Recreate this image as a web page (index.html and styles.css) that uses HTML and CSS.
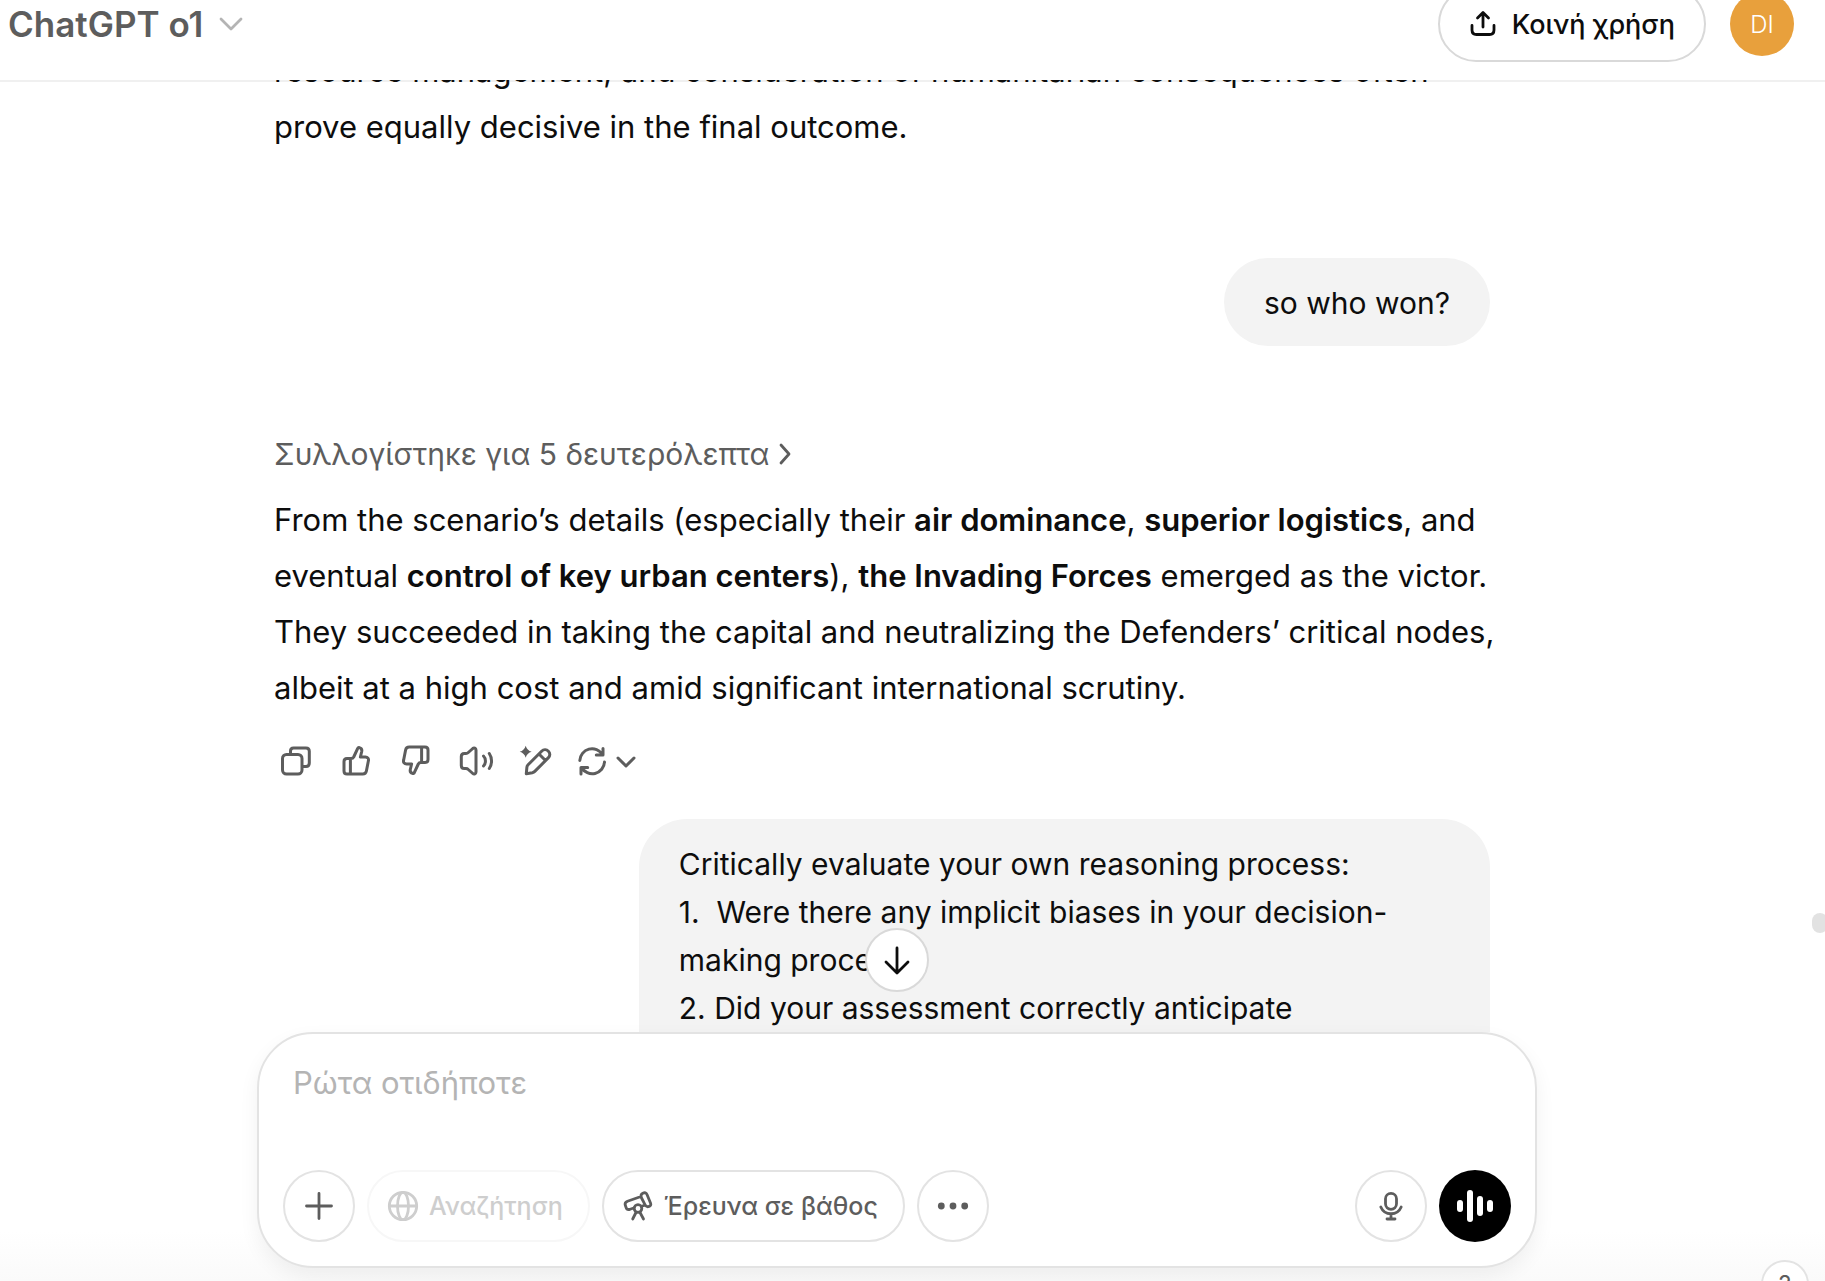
FILE: index.html
```html
<!DOCTYPE html>
<html lang="el">
<head>
<meta charset="utf-8">
<meta name="viewport" content="width=device-width, initial-scale=1">
<title>ChatGPT o1</title>
<link rel="stylesheet" href="styles.css">
</head>
<body>
<header class="topbar">
  <div class="topbar-row">
    <button class="model-picker" type="button">
      <span>ChatGPT o1</span>
      <svg class="model-chevron" width="24" height="24" viewBox="0 0 24 24"><path d="M2 7l10 10L22 7"/></svg>
    </button>
    <div class="topbar-actions">
      <button class="share" type="button">
        <svg width="28" height="28" viewBox="0 0 28 28"><path d="M14 17V3M8.500 8L14 2.500L19.500 8M3 15.500V20c0 3 1.500 4.500 4.500 4.500h13c3 0 4.500-1.500 4.500-4.500v-4.500"/></svg>
        <span>Κοινή χρήση</span>
      </button>
      <button class="avatar" type="button">DI</button>
    </div>
  </div>
</header>

<main class="thread">
  <div class="column">
    <p class="prose prose-previous">resource management, and consideration of humanitarian consequences often<br>prove equally decisive in the final outcome.</p>

    <div class="bubble bubble-short">so who won?</div>

    <button class="thought" type="button">
      <span>Συλλογίστηκε για 5 δευτερόλεπτα</span>
      <svg width="14" height="24" viewBox="0 0 14 24"><path d="M3 3l8 9l-8 9"/></svg>
    </button>

    <p class="prose">From the scenario’s details (especially their <strong>air dominance</strong>, <strong>superior logistics</strong>, and<br>eventual <strong>control of key urban centers</strong>), <strong>the Invading Forces</strong> emerged as the victor.<br>They succeeded in taking the capital and neutralizing the Defenders’ critical nodes,<br>albeit at a high cost and amid significant international scrutiny.</p>

    <div class="actions">
      <button type="button" aria-label="Αντιγραφή"><svg width="36" height="36" viewBox="0 0 36 36"><rect x="4.500" y="10.500" width="19.500" height="19.500" rx="4"/><path d="M12.500 10V7c0-2 1-3 3-3h12.500c2.300 0 3.300 1 3.300 3.300V19c0 2.300-1 3.500-3.300 3.500h-3.500"/></svg></button>
      <button type="button" aria-label="Καλή απάντηση"><svg width="36" height="36" viewBox="0 0 36 36"><path d="M9 14.500h4.200c1.200 0 2-.6 2.500-1.500l4-8.600c.3-.8 1-1.100 1.800-.8 1.800.6 2.600 2 2.200 3.900l-1.300 5.500h5c2.300 0 3.500 1.600 3 3.800l-2 10.200c-.4 2-1.600 3-3.600 3H9c-2 0-3-1-3-3v-9.500c0-2 1-3 3-3zM12.400 14.500V30"/></svg></button>
      <button type="button" aria-label="Κακή απάντηση"><svg width="36" height="36" viewBox="0 0 36 36"><path transform="rotate(180 18 16.500)" d="M9 14.500h4.200c1.200 0 2-.6 2.500-1.500l4-8.600c.3-.8 1-1.100 1.800-.8 1.800.6 2.600 2 2.200 3.900l-1.300 5.500h5c2.300 0 3.500 1.600 3 3.800l-2 10.200c-.4 2-1.600 3-3.600 3H9c-2 0-3-1-3-3v-9.500c0-2 1-3 3-3zM12.400 14.500V30"/></svg></button>
      <button type="button" aria-label="Ανάγνωση"><svg width="36" height="36" viewBox="0 0 36 36"><path d="M3.300 12.500c0-2 1-3 3-3H8c1 0 1.700-.4 2.300-1l4.500-4c1.200-1 3.200-.4 3.200 1.500v22c0 1.900-2 2.600-3.200 1.500l-4.500-4c-.6-.6-1.300-1-2.300-1H6.300c-2 0-3-1-3-3zM25.500 12c2.600 2.600 2.600 7.400 0 10M31.300 9.500c3 4.400 3 10.600 0 15"/></svg></button>
      <button type="button" aria-label="Επεξεργασία"><svg width="36" height="36" viewBox="0 0 36 36"><path d="M8.300 29.700l.6-6.500c.1-1 .5-1.800 1.200-2.500L23.600 7.200c2.200-2.200 5-1.800 6.800 0 1.800 1.800 2 4.500-.2 6.700L16.800 27.400c-.7.7-1.500 1.100-2.500 1.300zM21 10l6.500 6.500"/><path class="solid" d="M7.700 1.700Q9 6.400 13.700 7.700Q9 9 7.700 13.700Q6.400 9 1.700 7.700Q6.400 6.400 7.700 1.700z"/></svg></button>
      <button class="retry" type="button" aria-label="Νέα απάντηση"><svg width="36" height="36" viewBox="0 0 36 36"><path d="M5.800 16.500A12.300 12.300 0 0 1 28.500 10.500M29 4.500V11h-6.700M30.500 18A12.300 12.300 0 0 1 7.500 23.500M7 30v-6.500h6.700"/></svg><svg width="20" height="20" viewBox="0 0 20 20"><path d="M2 6l8 8l8-8"/></svg></button>
    </div>

    <div class="bubble bubble-long">Critically evaluate your own reasoning process:<br>1.&nbsp; Were there any implicit biases in your decision-<br>making process?<br>2. Did your assessment correctly anticipate</div>
  </div>
  <div class="scroll-thumb"></div>
</main>

<footer class="dock">
  <button class="to-bottom" type="button" aria-label="Κύλιση στο τέλος"><svg width="32" height="32" viewBox="0 0 32 32"><path d="M16 4v25M5 18l11 11l11-11"/></svg></button>
  <form class="composer">
    <textarea class="prompt" rows="1" aria-label="Ρώτα οτιδήποτε" placeholder="Ρώτα οτιδήποτε"></textarea>
    <div class="tools">
      <button class="round" type="button" aria-label="Προσθήκη"><svg width="36" height="36" viewBox="0 0 36 36"><path d="M18 5.500v25M5.500 18h25"/></svg></button>
      <button class="pill" type="button" disabled><svg width="36" height="36" viewBox="0 0 36 36"><circle cx="18" cy="18" r="13.700"/><ellipse cx="18" cy="18" rx="5.500" ry="13.700"/><path d="M4.500 18h27"/></svg><span>Αναζήτηση</span></button>
      <button class="pill" type="button"><svg width="36" height="36" viewBox="0 0 36 36"><path d="M21 8.500L7.500 13.300c-2 .8-2.800 2.200-2.200 4l.7 2c.6 1.900 2 2.600 4 2l3.800-1.300M22.300 18l3-.9M21.300 9.500c-.8-2.200-.2-3.500 1.500-4.300 2-.9 3.500-.5 4.300 1.500l3.500 8.500c.6 1.600 0 2.700-1.500 3.200-1.900.7-3.200.2-4-1.600z"/><circle cx="18" cy="20.500" r="3.800"/><path d="M16 24.500l-3.300 6.500M20 24.500l3.500 6.500"/></svg><span>Έρευνα σε βάθος</span></button>
      <button class="round" type="button" aria-label="Περισσότερα"><svg width="36" height="36" viewBox="0 0 36 36"><g class="solid"><circle cx="6.300" cy="18" r="3.400"/><circle cx="18" cy="18" r="3.400"/><circle cx="29.700" cy="18" r="3.400"/></g></svg></button>
      <button class="round mic" type="button" aria-label="Υπαγόρευση"><svg width="36" height="36" viewBox="0 0 36 36"><rect x="12.500" y="5.300" width="11" height="16" rx="5.500"/><path d="M7.800 19c3.800 9 16.600 9 20.400 0M18 26v5M14 31h8"/></svg></button>
      <button class="round voice" type="button" aria-label="Φωνή"><svg width="36" height="36" viewBox="0 0 36 36"><rect x="0" y="12" width="6" height="12" rx="3"/><rect x="10" y="2" width="6" height="32" rx="3"/><rect x="20" y="8" width="6" height="20" rx="3"/><rect x="30" y="12" width="6" height="12" rx="3"/></svg></button>
    </div>
  </form>
  <button class="help" type="button">?</button>
</footer>
</body>
</html>
```

FILE: styles.css
```css
* { box-sizing: border-box; }

body {
  display: flex;
  flex-direction: column;
  height: 100vh;
  margin: 0;
  overflow: hidden;
  background: #fff;
  color: #0d0d0d;
  font-family: Inter, "Noto Sans", sans-serif;
  font-size: 31px;
}

button {
  display: flex;
  align-items: center;
  justify-content: center;
  margin: 0;
  padding: 0;
  border: 0;
  background: none;
  color: inherit;
  font: inherit;
  white-space: nowrap;
}

svg {
  flex: none;
  fill: none;
  stroke: currentColor;
  stroke-width: 2.8;
  stroke-linecap: round;
  stroke-linejoin: round;
}

.solid { fill: currentColor; stroke: none; }

/* Top bar */
.topbar { flex: none; height: 80px; overflow: hidden; }

.topbar-row {
  display: flex;
  align-items: center;
  justify-content: space-between;
  height: 76px;
  margin-top: -14px;
  padding: 0 31px 0 8px;
}

.model-picker { gap: 16px; color: #5d5d5d; font-size: 35px; font-weight: 600; }
.model-chevron { color: #b4b4b4; }
.topbar-actions { display: flex; align-items: center; gap: 24px; }

.share {
  gap: 15px;
  height: 76px;
  padding: 0 29px;
  border: 2px solid #d9d9d9;
  border-radius: 38px;
  font-size: 27px;
  font-weight: 500;
}

.avatar {
  width: 64px;
  height: 64px;
  border-radius: 50%;
  background: #e8a03c;
  color: #fff;
  font-size: 24px;
  font-weight: 300;
}

/* Conversation */
.thread {
  position: relative;
  flex: 1;
  min-height: 0;
  overflow: hidden;
  padding-right: 31px;
  box-shadow: inset 0 2px #f0f0f0;
}

.column {
  display: flex;
  flex-direction: column;
  align-items: flex-start;
  max-width: 1280px;
  margin: 0 auto;
  padding: 0 47px 0 17px;
}

.prose { margin: 0; line-height: 56px; white-space: nowrap; }
.prose-previous { margin-top: -37px; }
.prose strong { font-weight: 600; }

.bubble {
  align-self: flex-end;
  padding: 21px 40px 19px;
  border-radius: 48px;
  background: #f3f3f3;
  font-size: 30px;
  line-height: 48px;
}

.bubble-short { margin: 103px 0 84px; }
.bubble-long { width: 70%; padding-bottom: 67px; }

.thought { gap: 9px; margin-bottom: 14px; color: #5d5d5d; font-size: 30px; line-height: 48px; }

.actions { display: flex; margin: 16px 0 27px -8px; color: #5d5d5d; }
.actions button { width: 60px; height: 60px; }
.actions .retry { gap: 6px; width: auto; padding: 0 8px; }
.actions svg { stroke-width: 3; }

.scroll-thumb {
  position: absolute;
  top: 833px;
  right: -3px;
  width: 16px;
  height: 20px;
  border-radius: 8px;
  background: #e2e2e2;
}

/* Composer */
.dock { position: relative; flex: none; padding: 0 31px 13px 0; background: linear-gradient(#fff 80%, #fafafa); }

.composer {
  display: flex;
  flex-direction: column;
  max-width: 1280px;
  margin: 0 auto;
  padding: 24px;
  border: 2px solid #e3e3e3;
  border-radius: 56px;
  background: #fff;
  box-shadow: 0 8px 20px rgba(0, 0, 0, 0.06);
}

.prompt {
  height: 112px;
  padding: 1px 10px;
  border: 0;
  outline: 0;
  background: none;
  resize: none;
  color: inherit;
  font: inherit;
  line-height: 48px;
}

.prompt::placeholder { color: #b4b4b4; opacity: 1; }

.tools { display: flex; gap: 12px; color: #5d5d5d; }

.round,
.pill { height: 72px; border: 2px solid #e3e3e3; border-radius: 36px; }
.round { width: 72px; }
.pill { gap: 8px; padding: 0 25px 0 16px; font-size: 25px; font-weight: 500; }
.pill:disabled { border-color: #f7f7f7; color: #cecece; }
.mic { margin-left: auto; }
.voice { border: 0; background: #000; color: #fff; }
.voice rect { fill: currentColor; stroke: none; }

.to-bottom {
  position: absolute;
  bottom: calc(100% + 40px);
  left: calc(50% - 16px);
  width: 64px;
  height: 64px;
  margin-left: -32px;
  border: 2px solid #d9d9d9;
  border-radius: 50%;
  background: #fff;
}

.help {
  position: absolute;
  right: 16px;
  bottom: -27px;
  width: 48px;
  height: 48px;
  border: 2px solid #e3e3e3;
  border-radius: 50%;
  background: #fff;
  color: #5d5d5d;
  font-size: 24px;
}
```
